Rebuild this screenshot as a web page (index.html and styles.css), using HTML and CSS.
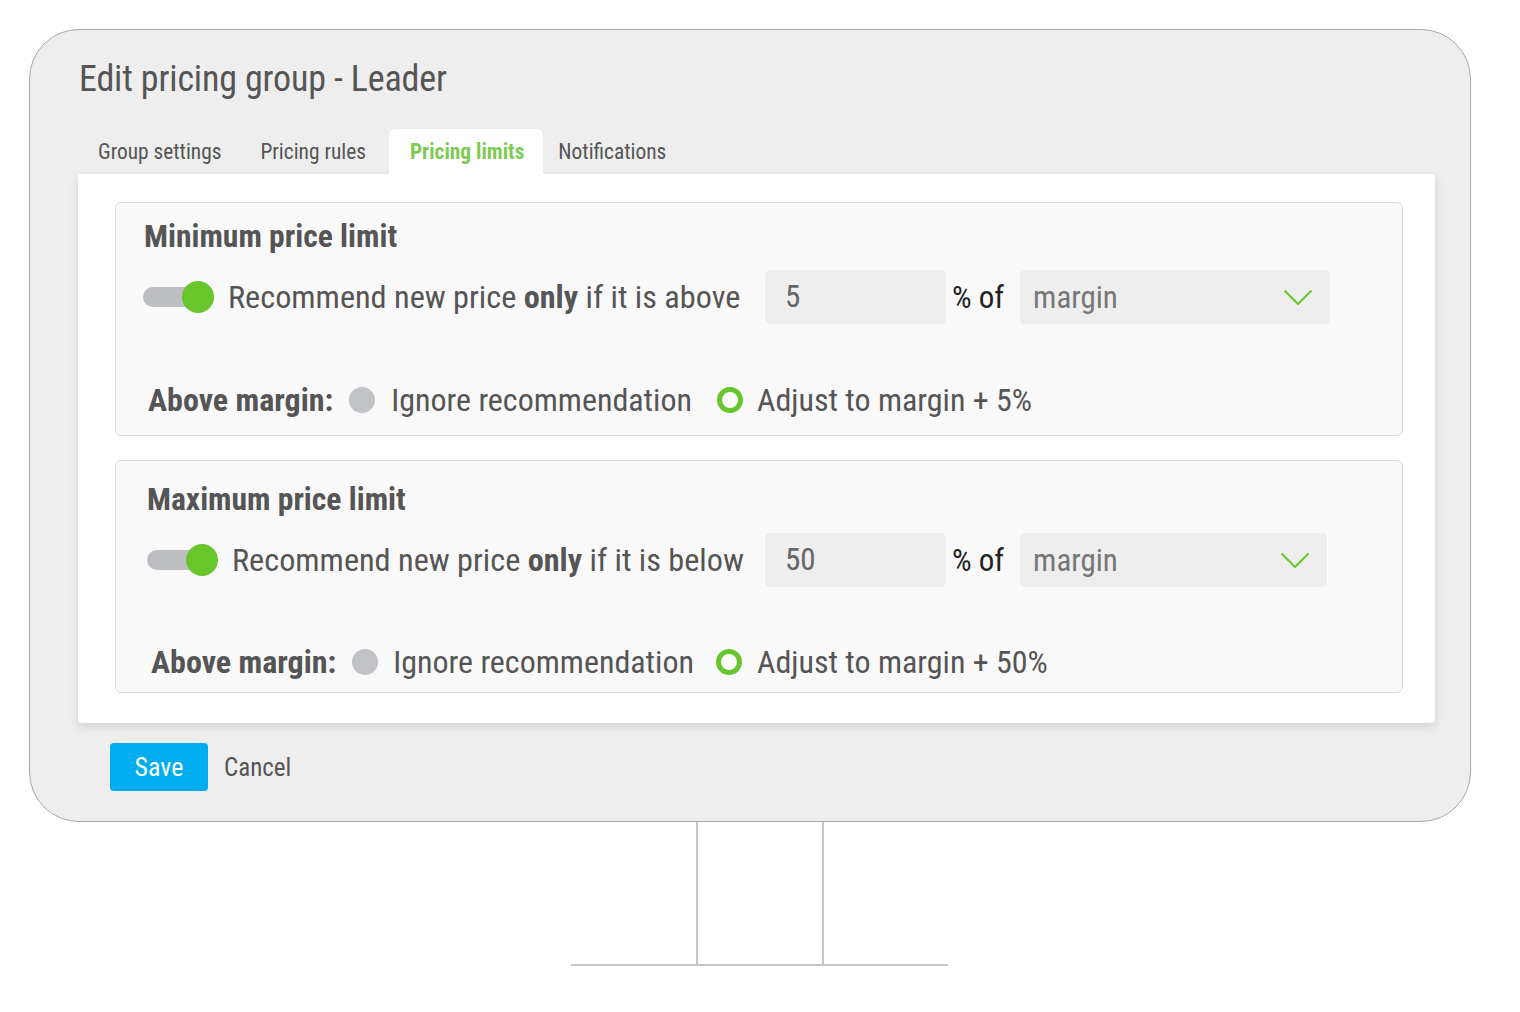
FILE: index.html
```html
<!DOCTYPE html>
<html lang="en">
<head>
<meta charset="utf-8">
<title>Edit pricing group - Leader</title>
<link rel="stylesheet" href="styles.css">
</head>
<body>
<div class="page">
  <div class="monitor">
    <h1 class="title">Edit pricing group - Leader</h1>
    <div class="tabs">
      <div class="tab tab-first">Group settings</div>
      <div class="tab">Pricing rules</div>
      <div class="tab active">Pricing limits</div>
      <div class="tab tab-last">Notifications</div>
    </div>
    <div class="panel">
      <section class="limit">
        <h2 class="limit-title">Minimum price limit</h2>
        <div class="row">
          <div class="toggle"><span class="track"></span><span class="knob"></span></div>
          <div class="label">Recommend new price <b>only</b> if it is above</div>
          <div class="input">5</div>
          <div class="of">% of</div>
          <div class="select"><span>margin</span>
            <svg class="chev" width="30" height="17" viewBox="0 0 30 17"><path d="M1.5 1.5 L15 15 L28.5 1.5" fill="none" stroke="#6cc52d" stroke-width="2"/></svg>
          </div>
        </div>
        <div class="row2">
          <span class="row2-label">Above margin:</span>
          <span class="radio off"></span>
          <span class="opt">Ignore recommendation</span>
          <span class="radio on"></span>
          <span class="opt opt-last">Adjust to margin + 5%</span>
        </div>
      </section>
      <section class="limit limit-second">
        <h2 class="limit-title">Maximum price limit</h2>
        <div class="row">
          <div class="toggle"><span class="track"></span><span class="knob"></span></div>
          <div class="label">Recommend new price <b>only</b> if it is below</div>
          <div class="input">50</div>
          <div class="of">% of</div>
          <div class="select"><span>margin</span>
            <svg class="chev" width="30" height="17" viewBox="0 0 30 17"><path d="M1.5 1.5 L15 15 L28.5 1.5" fill="none" stroke="#6cc52d" stroke-width="2"/></svg>
          </div>
        </div>
        <div class="row2">
          <span class="row2-label">Above margin:</span>
          <span class="radio off"></span>
          <span class="opt">Ignore recommendation</span>
          <span class="radio on"></span>
          <span class="opt opt-last">Adjust to margin + 50%</span>
        </div>
      </section>
    </div>
    <div class="actions">
      <button class="save">Save</button>
      <span class="cancel">Cancel</span>
    </div>
  </div>
  <div class="stand"></div>
  <div class="base"></div>
</div>
</body>
</html>
```
FILE: styles.css
```css
* { box-sizing: border-box; }
html, body { margin: 0; padding: 0; background: #ffffff; }
body {
  font-family: "Roboto Condensed", "Liberation Sans Narrow", Roboto, sans-serif;
  color: #555555;
  width: 1520px;
  height: 1012px;
  overflow: hidden;
}
.page {
  padding-top: 29px;
  display: flex;
  flex-direction: column;
}
.monitor {
  margin-left: 29px;
  width: 1442px;
  height: 793px;
  border: 1px solid #a9a9a9;
  border-radius: 50px;
  background: #edeeed;
  padding: 26px 35px 30px 48px;
}
.title {
  margin: 0 0 27px 0;
  padding-left: 1px;
  font-weight: 400;
  font-size: 36px;
  letter-spacing: -0.15px;
  line-height: 46px;
  color: #555555;
}
.tabs {
  display: flex;
  height: 45px;
}
.tab {
  padding: 0 20px;
  font-size: 21.4px;
  line-height: 45px;
  color: #555555;
  border-radius: 6px 6px 0 0;
}
.tab-first { padding-right: 19px; }
.tab.active {
  background: #ffffff;
  color: #7fca52;
  font-weight: 700;
  margin-left: 3px;
  padding: 0 19px 0 21px;
}
.tab-last { padding-left: 15px; }
.panel {
  background: #ffffff;
  height: 549px;
  border-radius: 0 4px 4px 4px;
  box-shadow: 0 3px 10px rgba(0,0,0,0.13);
  padding: 28px 32px 30px 37px;
  display: flex;
  flex-direction: column;
  gap: 24px;
}
.limit {
  background: #f9f9f9;
  border: 1px solid #dcdcdc;
  border-radius: 6px;
  height: 234px;
  padding: 15px 28px 0 28px;
}
.limit-second { height: 233px; padding-top: 20px; padding-left: 31px; }
.limit-title {
  margin: 0;
  font-size: 31.6px;
  line-height: 38px;
  font-weight: 700;
  color: #555555;
}
.row {
  margin-top: 14px;
  height: 54px;
  display: flex;
  align-items: center;
}
.toggle {
  position: relative;
  width: 71px;
  height: 32px;
  flex: 0 0 71px;
  margin-left: -1px;
}
.limit-second .toggle { margin-left: 0; }
.track {
  position: absolute;
  left: 0; top: 6px;
  width: 58px; height: 20px;
  border-radius: 10px;
  background: #bdbec1;
}
.knob {
  position: absolute;
  right: 0; top: 0;
  width: 32px; height: 32px;
  border-radius: 50%;
  background: #68c52c;
}
.label {
  margin-left: 14px;
  flex: 0 0 537px;
  font-size: 32.25px;
  color: #555555;
  white-space: nowrap;
}
.limit-second .label { flex-basis: 533px; }
.label b { font-weight: 700; }
.input {
  width: 181px;
  height: 54px;
  background: #edeeed;
  border-radius: 5px;
  font-size: 31px;
  line-height: 54px;
  padding-left: 20px;
  color: #666666;
}
.of {
  margin-left: 6px;
  font-size: 31px;
  color: #222222;
}
.select {
  margin-left: 16px;
  width: 310px;
  height: 54px;
  background: #edeeed;
  border-radius: 5px;
  display: flex;
  align-items: center;
  justify-content: space-between;
  padding: 0 17px 0 13px;
  font-size: 31px;
  color: #777777;
}
.limit-second .select { width: 307px; }
.chev { display: block; }
.row2 {
  margin-top: 56px;
  height: 40px;
  display: flex;
  align-items: center;
  padding-left: 4px;
  font-size: 32px;
  white-space: nowrap;
}
.limit-second .row2 { margin-top: 55px; }
.row2-label { font-weight: 700; color: #555555; }
.radio {
  width: 26px;
  height: 26px;
  border-radius: 50%;
  flex: 0 0 26px;
  margin-left: 16px;
}
.radio.off { background: #c1c2c5; }
.radio.on {
  background: #ffffff;
  border: 5px solid #68c52c;
  margin-left: 25px;
}
.opt { margin-left: 16px; color: #555555; }
.opt-last { margin-left: 14px; }
.limit-second .opt { margin-left: 15px; }
.limit-second .radio.on { margin-left: 22px; }
.limit-second .opt-last { margin-left: 15px; }
.actions {
  margin-top: 20px;
  display: flex;
  align-items: center;
  padding-left: 32px;
}
.save {
  width: 98px;
  height: 48px;
  border: none;
  border-radius: 4px;
  background: #00aeef;
  color: #ffffff;
  font-family: inherit;
  font-size: 26px;
  padding: 0;
}
.cancel {
  margin-left: 16px;
  font-size: 25px;
  color: #555555;
}
.stand {
  margin-left: 696px;
  width: 128px;
  height: 142px;
  border-left: 2px solid #c6c6c6;
  border-right: 2px solid #c6c6c6;
}
.base {
  margin-left: 571px;
  width: 377px;
  height: 2px;
  background: #c6c6c6;
}
```
